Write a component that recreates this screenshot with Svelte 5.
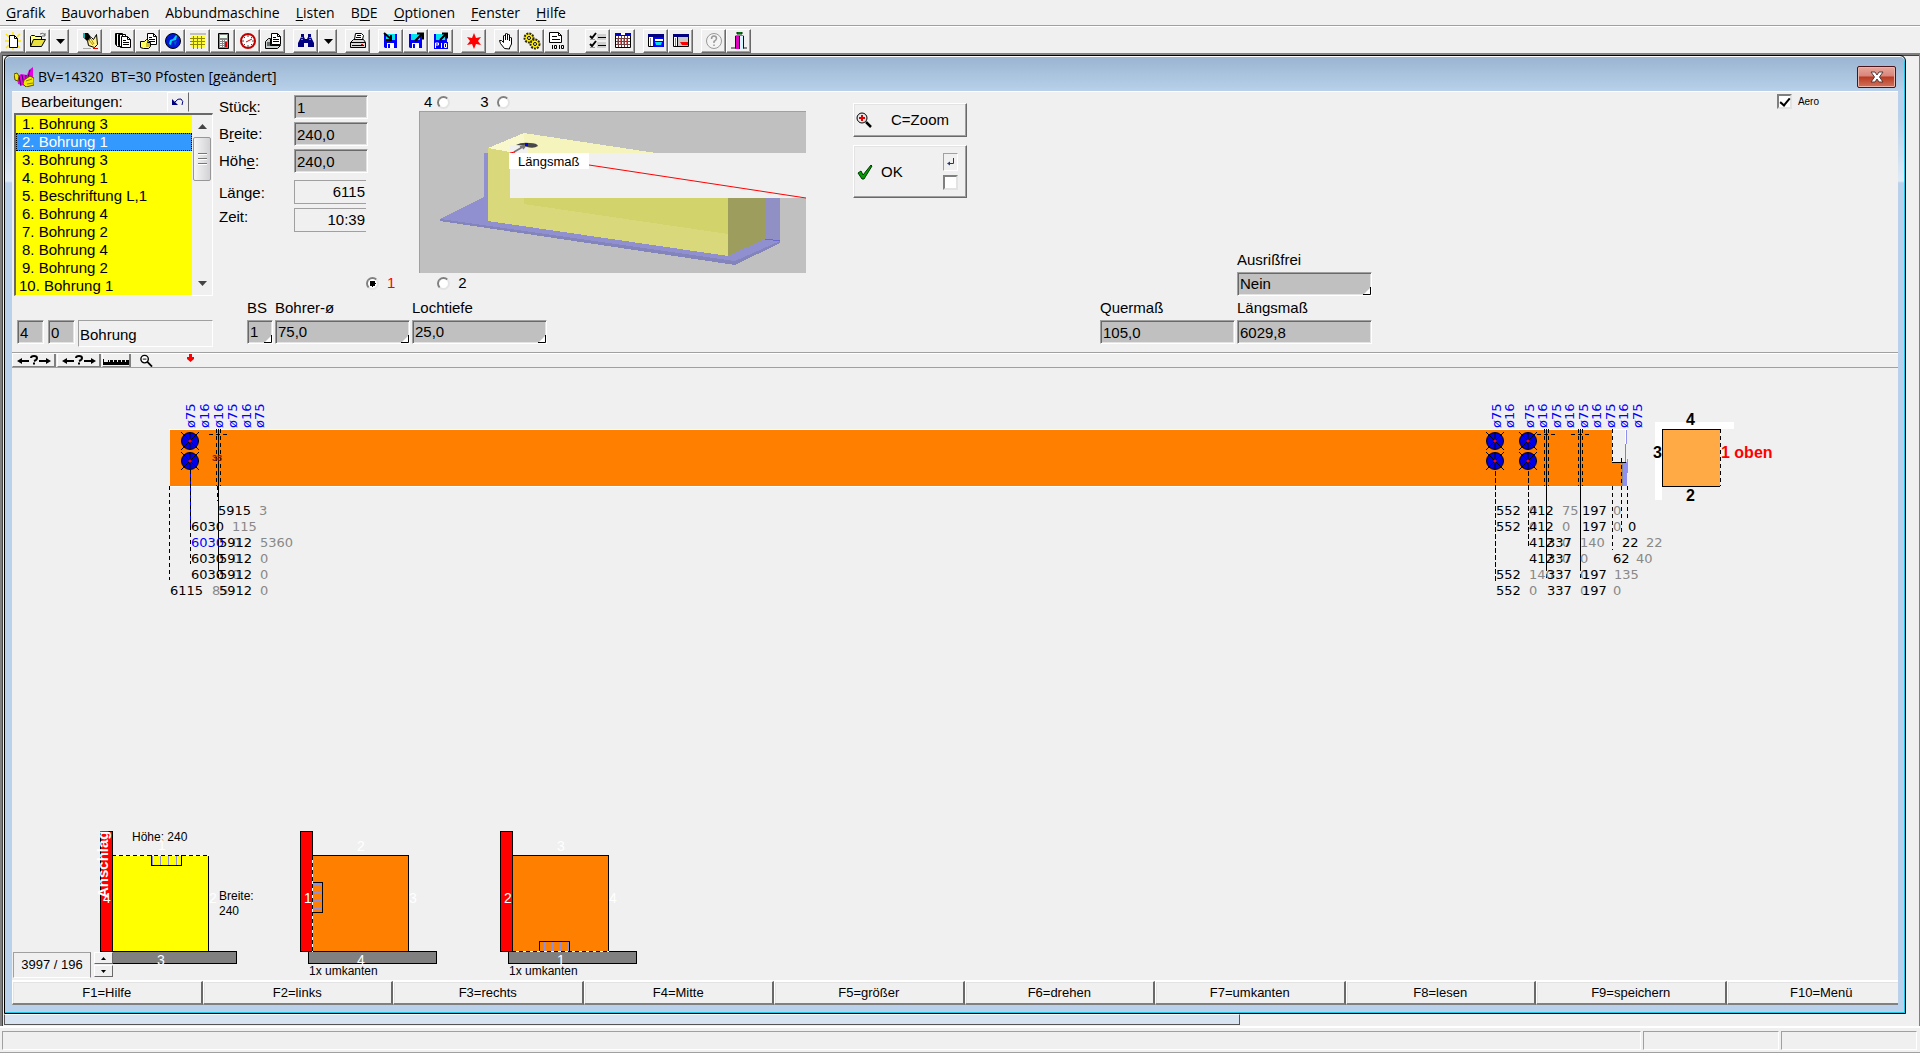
<script>
  const menus = [
    ['', 'G', 'rafik'], ['', 'B', 'auvorhaben'], ['Abbund', 'm', 'aschine'], ['', 'L', 'isten'],
    ['B', 'D', 'E'], ['', 'O', 'ptionen'], ['', 'F', 'enster'], ['', 'H', 'ilfe']
  ];

  const drop = '<path d="M5 7h9l-4.500 5z" fill="#000"/>';
  const disk = '<path d="M2 2h13v14H3l-1-1z" fill="#0000ff"/><path d="M4 2h9v6H4z" fill="#00e5ee"/><path d="M5 11h7v5H5z" fill="#fff"/><path d="M6 12h2v4H6z" fill="#0000ff"/>';
  const page = (x, y) => `<path d="M${x}.5 ${y}.5h6l3 3v8h-9z" fill="#fff" stroke="#000"/><path d="M${x + 6}.5 ${y}.5v3h3M${x + 2} ${y + 4}.5h3M${x + 2} ${y + 6}.5h6M${x + 2} ${y + 8}.5h6" fill="none" stroke="#000"/>`;
  const icons = {
    new: '<path d="M2 2l4 4M9 0v4M16 2l-3 3M1 9h4M2 16l3-3M9 14v4M16 16l-3-3M14 9h3" stroke="#ffe800" stroke-width="1.500"/><path d="M5.500 3.500h5l3 3v9h-8z" fill="#fff" stroke="#000"/><path d="M10.500 3.500v3h3" fill="none" stroke="#000"/>',
    open: '<path d="M1.500 14.500v-10l1-1h3l1 1h6v3" fill="#ffff80" stroke="#000"/><path d="M1.500 14.500l3-7h12l-4 7z" fill="#e8e040" stroke="#000"/><path d="M11 2q3-2 5 1M16 1v3h-3" fill="none" stroke="#666"/>',
    drop,
    brush: '<path d="M2 1h5l3 4-4 4-4-4z" fill="#000"/><path d="M2 1h2v5H2z" fill="#00b8b8"/><path d="M6.500 8.500l4-3 2 2 3-5 1 10-3 3-6-2z" fill="#fff080" stroke="#000"/><path d="M8 8l4 5M10 7l3 5" stroke="#b09000"/><path d="M2 16.500h8" stroke="#aaa"/><path d="M12 16.500h5" stroke="#e00000"/>',
    copies: '<path d="M1.500 1.500h7v13h-5l-2-2zM4.500 2.500h7v13h-5l-2-2z" fill="#fff" stroke="#000"/><path d="M2.500 2v11M5.500 3v11" stroke="#000"/>' + page(7, 4),
    handpage: page(8, 1) + '<path d="M1.500 9.500h4l2-2 2 1-1 2h3v4l-2 2h-5l-3-1z" fill="#ffff60" stroke="#000"/><path d="M7 12h4M7 14h4" stroke="#a08000"/>',
    globe: '<circle cx="9" cy="9" r="7.500" fill="#0018d8" stroke="#000"/><path d="M5 12l1-4 3-1 3-4 1 1-1 4-4 1-1 4z" fill="#00d8f0"/><path d="M10 10l3-1-2 5z" fill="#0060c0"/>',
    grid: '<path d="M1 1h16v2H1z" fill="#c0c0c0"/><path d="M2 4h14v12H2z" fill="#ffff30"/><path d="M1 6.500h15M1 9.500h15M1 12.500h15M4.500 4v13M8.500 4v13M12.500 4v13" stroke="#908800"/>',
    calc: '<path d="M4.500 1.500h10v15h-10z" fill="#888" stroke="#000"/><path d="M6 3h7v3H6z" fill="#e8ffe8"/><path d="M6 8h2v1H6zM9 8h1v1H9zM11 8h2v1h-2zM6 10h2v1H6zM9 10h1v1H9zM6 12h2v1H6zM9 12h1v1H9zM6 14h2v1H6zM9 14h1v1H9z" fill="#fff"/><path d="M11 10h2v5h-2z" fill="#e00000"/>',
    clock: '<circle cx="9" cy="9" r="7" fill="#fff" stroke="#c00000" stroke-width="2"/><path d="M9 3v2M9 13v2M3 9h2M13 9h2M5 5l1 1M13 5l-1 1M5 13l1-1M13 13l-1-1" stroke="#444"/><path d="M9 9l4-2M9 9l-2 1" stroke="#e00000"/>',
    printpage: page(7, 1) + '<path d="M1.500 9.500l3-3h2v7h10l-3 3h-12z" fill="#c8d0d0" stroke="#000"/><path d="M3 11h5M3 13h8" stroke="#000"/>',
    find: '<path d="M4 2h3v3l1 2h2l1-2V2h3v3l3 6v4h-6v-4H7v4H1v-4l3-6z" fill="#000080"/><path d="M5 5v4M13 5v4" stroke="#fff" stroke-dasharray="1 1"/>',
    print: '<path d="M5.500 7.500l1-6h6l2 2-1 4" fill="#fff" stroke="#000"/><path d="M8 3.500h4M7 5.500h5" stroke="#000"/><path d="M1.500 10.500l3-3h10l2 3v5h-15z" fill="#d8d8d8" stroke="#000"/><path d="M1.500 10.500h15M3 13.500h12" stroke="#000"/><path d="M12 12h2v1h-2z" fill="#e00000"/>',
    diskin: disk + '<path d="M2 1l7 6M9 3v5H4" stroke="#000" stroke-width="2" fill="none"/>',
    diskout: disk + '<path d="M8 9l7-7M10 1.500h6v6" stroke="#000" stroke-width="2" fill="none"/>',
    diskp: disk + '<path d="M8 8l6-6M10 1.500h5v5" stroke="#000" stroke-width="2" fill="none"/><path d="M2 10h14v7H2z" fill="#0000ff"/><path d="M3.500 16v-5h3v2h-3M9.500 11v5M12.500 11.500h2v4h-2z" stroke="#fff" fill="none"/>',
    star: '<path d="M9 1l2 5 5-1-3 4 3 4-5-1-2 5-2-5-5 1 3-4-3-4 5 1z" fill="#ff0000"/>',
    hand: '<path d="M6.500 16.500l-4-5-1-3h2l2 2V4l1-1 1 1v4-6l1-1 1 1v6-5l1-1 1 1v6-3l1-1 1 1v6l-2 4v1z" fill="#fff" stroke="#000"/>',
    gears: '<circle cx="6" cy="6" r="4.500" fill="#fff000" stroke="#302800" stroke-width="2" stroke-dasharray="2 1"/><circle cx="12" cy="12" r="4.500" fill="#fff000" stroke="#302800" stroke-width="2" stroke-dasharray="2 1"/><circle cx="6" cy="6" r="1.500" fill="#fff" stroke="#000"/><circle cx="12" cy="12" r="1.500" fill="#fff" stroke="#000"/>',
    binary: '<path d="M1.500 .500h9l3 3v7h-12z" fill="#fff" stroke="#000"/><path d="M10.500 .500v3h3M4 4.500h5M4 7.500h8" stroke="#000" fill="none"/><path d="M4.500 13v4M6.500 13.500h2v3h-2zM11.500 13v4M13.500 13.500h2v3h-2z" stroke="#000" fill="none"/>',
    checks: '<path d="M8 2h9v6H8zM8 10h9v6H8z" fill="#d0d0d0"/><path d="M1 4l2 2 4-5M1 12l2 2 4-5" fill="none" stroke="#000" stroke-width="2"/><path d="M9 5.500h8M9 13.500h8" stroke="#000"/><path d="M1 7.500h5M1 15.500h5" stroke="#999"/>',
    calendar: '<path d="M1.500 2.500h15v13h-15z" fill="#fff" stroke="#000"/><path d="M1 1h16v3H1z" fill="#0000d0"/><path d="M7 1h4v2H7z" fill="#fff"/><path d="M2 6.500h14M2 9.500h14M2 12.500h14M4.500 4v11M7.500 4v11M10.500 4v11M13.500 4v11" stroke="#704040"/><path d="M3 8h12M3 11h12" stroke="#e00000" stroke-dasharray="1 2"/>',
    winblue: '<path d="M1.500 2.500h15v12h-15z" fill="#fff" stroke="#000"/><path d="M1 2h16v3H1z" fill="#000080"/><path d="M6 5h11v10H6z" fill="#0000ff"/><path d="M8 7h8v2H8z" fill="#fff"/><path d="M8 10h7l-1 3H9z" fill="#00e0f0"/><path d="M3 7h1M3 9h1M3 11h1M3 13h1" stroke="#000"/>',
    winred: '<path d="M1.500 2.500h15v12h-15z" fill="#fff" stroke="#000"/><path d="M1 2h16v3H1z" fill="#000080"/><path d="M6 5h10v9H6z" fill="#c8c8c8"/><path d="M8 10h8v3h-6z" fill="#ff0000"/><path d="M3 7h1M3 9h1M3 11h1M3 13h1M5.500 5v10" stroke="#000"/>',
    help: '<circle cx="9" cy="9" r="7.500" fill="#f4f4f4" stroke="#999"/><path d="M6.500 7q0-3 2.500-3t2.500 2.500q0 1.500-2.500 3v1.500M9 12.500v1.500" stroke="#999" fill="none" stroke-width="1.500"/>',
    exit: '<path d="M7 0h5v2H7z" fill="#00b020" stroke="#003000"/><path d="M1 16.500h4.500V4h8v12.500H17" fill="none" stroke="#000080"/><path d="M6 4h3v13H6z" fill="#e000c0"/><path d="M9 4h4v13H9z" fill="#d8f4ff"/><path d="M9.500 4v13" stroke="#000"/><path d="M1 15h4v2H1zM14 15h3v2h-3z" fill="#888"/>'
  };

  const toolGroups = [
    ['new', 'open', 'drop'], ['brush'],
    ['copies', 'handpage', 'globe', 'grid', 'calc', 'clock', 'printpage'],
    ['find', 'drop'], ['print'], ['diskin', 'diskout', 'diskp'], ['star'],
    ['hand', 'gears', 'binary'], ['checks', 'calendar'], ['winblue', 'winred'], ['help', 'exit']
  ];

  const operations = ['Bohrung 3', 'Bohrung 1', 'Bohrung 3', 'Bohrung 1', 'Beschriftung L,1', 'Bohrung 4', 'Bohrung 2', 'Bohrung 4', 'Bohrung 2', 'Bohrung 1'];
  let selected = $state(1);
  let side = $state('1');

  const dims = [
    { id: 'stueck', a: 'Stüc', k: 'k', b: ':', value: '1' },
    { id: 'breite', a: 'B', k: 'r', b: 'eite:', value: '240,0' },
    { id: 'hoehe', a: 'Höh', k: 'e', b: ':', value: '240,0' }
  ];

  const diameters = [
    [195, 75], [209, 16], [223, 16], [237, 75], [251, 16], [264, 75],
    [1501, 75], [1514, 16], [1534, 75], [1547, 16], [1561, 75], [1574, 16],
    [1588, 75], [1601, 16], [1615, 75], [1628, 16], [1642, 75]
  ];
  const holes = [[190, 441], [190, 461], [1495, 441], [1495, 461], [1528, 441], [1528, 461]];

  // x, row, text, colour class
  const measures = [
    [218, 0, '5915', 'k'], [259, 0, '3', 'g'],
    [191, 1, '6030', 'k'], [232, 1, '115', 'g'],
    [191, 2, '6030', 'b'], [232, 2, '0', 'g'], [219, 2, '5912', 'k'], [260, 2, '5360', 'g'],
    [191, 3, '6030', 'k'], [232, 3, '0', 'g'], [219, 3, '5912', 'k'], [260, 3, '0', 'g'],
    [191, 4, '6030', 'k'], [232, 4, '0', 'g'], [219, 4, '5912', 'k'], [260, 4, '0', 'g'],
    [170, 5, '6115', 'k'], [212, 5, '85', 'g'], [219, 5, '5912', 'k'], [260, 5, '0', 'g'],
    [1496, 0, '552', 'k'], [1529, 0, '0', 'g'], [1529, 0, '412', 'k'], [1562, 0, '75', 'g'], [1582, 0, '197', 'k'], [1613, 0, '0', 'g'],
    [1496, 1, '552', 'k'], [1529, 1, '0', 'g'], [1529, 1, '412', 'k'], [1562, 1, '0', 'g'], [1582, 1, '197', 'k'], [1613, 1, '0', 'g'], [1628, 1, '0', 'k'],
    [1529, 2, '412', 'k'], [1562, 2, '0', 'g'], [1547, 2, '337', 'k'], [1580, 2, '140', 'g'], [1622, 2, '22', 'k'], [1646, 2, '22', 'g'],
    [1529, 3, '412', 'k'], [1562, 3, '0', 'g'], [1547, 3, '337', 'k'], [1580, 3, '0', 'g'], [1613, 3, '62', 'k'], [1636, 3, '40', 'g'],
    [1496, 4, '552', 'k'], [1529, 4, '140', 'g'], [1547, 4, '337', 'k'], [1580, 4, '0', 'g'], [1582, 4, '197', 'k'], [1614, 4, '135', 'g'],
    [1496, 5, '552', 'k'], [1529, 5, '0', 'g'], [1547, 5, '337', 'k'], [1580, 5, '0', 'g'], [1582, 5, '197', 'k'], [1613, 5, '0', 'g']
  ];

  const fkeys = ['Hilfe', 'links', 'rechts', 'Mitte', 'größer', 'drehen', 'umkanten', 'lesen', 'speichern', 'Menü'];
</script>

{#snippet combo(id, value)}
  <span class="combo">
    <select {id}><option>{value}</option></select>
    <svg viewBox="0 0 8 8" aria-hidden="true"><path d="M8 0v8H0z" fill="#fff" /><path d="M7.500 0v7.500H0" fill="none" stroke="#000" /></svg>
  </span>
{/snippet}

<div class="app">
  <nav class="menubar">
    {#each menus as [a, k, b]}
      <button>{a}<u>{k}</u>{b}</button>
    {/each}
  </nav>

  <div class="toolbar">
    {#each toolGroups as group, i}
      <div class="group" class:wide={i === 8}>
        {#each group as name}
          <button class="tool" class:narrow={name === 'drop'} aria-label={name}>
            <svg viewBox="0 0 18 18">{@html icons[name]}</svg>
          </button>
        {/each}
      </div>
    {/each}
  </div>

  <main class="mdi">
    <section class="window">
      <header class="title">
        <svg class="appicon" viewBox="0 0 20 20" aria-hidden="true">
          <path d="M19 0v10l-3 5-5 4-7-2-1-7 4-3 6 1 2-5z" fill="#e800e8" />
          <path d="M5 9l2 10M8 8l2 10M12 8l-1 8M16 3l-2 8" stroke="#400060" fill="none" />
          <path d="M0 7l3-1 2 3-1 5-3-1zM10 13l6-4 4 2v7l-8 2-3-3z" fill="#f0e800" stroke="#605000" />
          <path d="M12 14l6-2M13 17l6-1" stroke="#908000" />
        </svg>
        <h1>BV=14320&nbsp; BT=30 Pfosten [geändert]</h1>
        <button class="close" aria-label="Schließen">
          <svg viewBox="0 0 14 12"><path d="M1 1h4l2 3 2-3h4L9.500 6 13 11H9L7 8l-2 3H1l3.500-5z" fill="#fff" stroke="#553a3a" /></svg>
        </button>
      </header>

      <div class="client">
        <form class="form" onsubmit={(e) => e.preventDefault()}>
          <div class="ops">
            <div class="opshead">
              <span id="opslabel">Bearbeitungen:</span>
              <button type="button" class="undo" aria-label="Rückgängig">
                <svg viewBox="0 0 12 10"><path d="M3 5q3-4 6-3 3 2 1 6" fill="none" stroke="#000080" /><path d="M0 2v6h6z" fill="#000080" /></svg>
              </button>
            </div>
            <div class="listbox">
              <div class="items" role="listbox" aria-labelledby="opslabel">
                {#each operations as op, i}
                  <button type="button" role="option" aria-selected={selected === i} class:tens={i === 9} onclick={() => (selected = i)}>{i + 1}. {op}</button>
                {/each}
              </div>
              <div class="scroll">
                <svg viewBox="0 0 9 5"><path d="M0 5L4.500 0 9 5z" fill="#444" /></svg>
                <div class="thumb"><i></i><i></i><i></i></div>
                <svg viewBox="0 0 9 5"><path d="M0 0h9L4.500 5z" fill="#444" /></svg>
              </div>
            </div>
            <div class="opcode">
              <input class="field" aria-label="Code" value="4" />
              <input class="field" aria-label="Variante" value="0" />
              <output class="opname">Bohrung</output>
            </div>
          </div>

          <div class="middle">
            <div class="upper">
              <div class="dims">
                {#each dims as d}
                  <label for={d.id}>{d.a}<u>{d.k}</u>{d.b}</label>
                  <input class="field" id={d.id} value={d.value} />
                {/each}
                <label class="calc" for="laenge">Länge:</label><output class="calc" id="laenge">6115</output>
                <label class="time" for="zeit">Zeit:</label><output class="time" id="zeit">10:39</output>
              </div>
              <div class="preview">
                <div class="sides">
                  <label>4<input type="radio" name="side" value="4" bind:group={side} /></label>
                  <label class="three">3<input type="radio" name="side" value="3" bind:group={side} /></label>
                </div>
                <svg class="solid" viewBox="0 0 387 162" role="img" aria-label="Längsmaß">
                  <g shape-rendering="crispEdges">
                    <path d="M0 0h387v162H0z" fill="#c0c0c0" />
                    <path d="M65 42h5v45h-5zM21 108L65 86h5v24L309 145l37-17V87h15v45l-45 22L21 110z" fill="#9090d0" />
                    <path d="M21 108L316 150l45-20v2l-45 22L21 110z" fill="#8484bc" />
                    <path d="M346 87h15v43l-15-2z" fill="#9090c4" />
                    <path d="M69 37l36-15 132 20v3H69z" fill="#f4f4bc" />
                    <path d="M69 37l36-15v13l-14 7H80z" fill="#f8f8cc" />
                    <path d="M69 37l22 4v46h218v58L69 110z" fill="#d9d97b" />
                    <path d="M105 87h204v36L105 93z" fill="#d3d36c" />
                    <path d="M309 87h37v41l-37 17z" fill="#9d9d5d" />
                    <path d="M91 42h296v45H91zM91 34h18v8H91z" fill="#f0f0f0" />
                    <path d="M346 128l15 2" stroke="#6868d0" />
                  </g>
                  <path d="M97 34q5-3 14-2 7 0 8 3-4 3-11 1-4-2-11-2z" fill="#484848" />
                  <path d="M95 41l12-7M101 36l6-2-3 4" stroke="#777" stroke-width="1.500" fill="none" />
                  <path d="M106 32h3v3h-3z" fill="#0000ff" />
                  <path d="M91 42l5-1" stroke="#f00" />
                  <path d="M170 54L387 87" stroke="#f00" />
                  <path d="M90 42h80v16H90z" fill="#fff" />
                  <text x="99" y="55" font-size="13">Längsmaß</text>
                  <path d="M0 .500h387M.500 0v162" stroke="#a0a0a0" />
                </svg>
              </div>
            </div>
            <div class="sides below">
              <label class="red"><input type="radio" name="side" value="1" bind:group={side} />1</label>
              <label class="two"><input type="radio" name="side" value="2" bind:group={side} />2</label>
            </div>
            <div class="params">
              <div class="cell tiny"><label for="bs">BS</label>{@render combo('bs', '1')}</div>
              <div class="cell"><label for="bohrer">Bohrer-ø</label>{@render combo('bohrer', '75,0')}</div>
              <div class="cell"><label for="tiefe">Lochtiefe</label>{@render combo('tiefe', '25,0')}</div>
            </div>
          </div>

          <div class="actions">
            <button type="button" class="raised zoom">
              <svg viewBox="0 0 16 16"><circle cx="6" cy="6" r="5" fill="#e8e8e8" stroke="#000" /><path d="M3 6h6M6 3v6" stroke="#e00000" stroke-width="2" /><path d="M10 10l5 5" stroke="#000" stroke-width="2.500" /></svg>
              <span>C=Zoom</span>
            </button>
            <div class="raised okbox">
              <button type="submit">
                <svg viewBox="0 0 16 16"><path d="M1 9l3-2 2 4 8-10 1 1-8 13H5z" fill="#00a000" stroke="#003800" /></svg>
                <span>OK</span>
              </button>
              <div class="okside">
                <span class="enter"><svg viewBox="0 0 8 8"><path d="M6.500 0v5.500H2" fill="none" stroke="#223a66" /><path d="M0 5.500l3-2v4z" fill="#223a66" /></svg></span>
                <input type="checkbox" aria-label="Enter" />
              </div>
            </div>
          </div>

          <div class="places">
            <div class="cell"><label for="quer">Quermaß</label><input class="field" id="quer" value="105,0" /></div>
            <div class="stack">
              <div class="cell"><label for="ausriss">Ausrißfrei</label>{@render combo('ausriss', 'Nein')}</div>
              <div class="cell"><label for="laengs">Längsmaß</label><input class="field" id="laengs" value="6029,8" /></div>
            </div>
          </div>

          <label class="aero"><input type="checkbox" checked />Aero</label>
        </form>

        <div class="subbar">
          <button class="mini" aria-label="Maß links"><svg viewBox="0 0 34 12"><path d="M3 7h9M22 7h9" stroke="#000" stroke-width="2" /><path d="M0 7l5-3v6zM34 7l-5-3v6z" /><path d="M14 4q0-2 3-2t3 2-3 3M17 8.500v2" fill="none" stroke="#000" stroke-width="2" /></svg></button>
          <button class="mini" aria-label="Maß rechts"><svg viewBox="0 0 34 12"><path d="M3 7h9M22 7h9" stroke="#000" stroke-width="2" /><path d="M0 7l5-3v6zM34 7l-5-3v6z" /><path d="M14 4q0-2 3-2t3 2-3 3M17 8.500v2" fill="none" stroke="#000" stroke-width="2" /></svg></button>
          <button class="mini ruler" aria-label="Lineal"><svg viewBox="0 0 26 12"><path d="M0 5h1v3h4V6h1v2h1V6h3v2h1V6h3v2h1V6h3v2h1V6h3v2h1V6h3v5H0z" /></svg></button>
          <button class="flat" aria-label="Verkleinern"><svg viewBox="0 0 14 14"><circle cx="5.500" cy="5.500" r="4" fill="#fff" stroke="#000" stroke-width="1.500" /><path d="M3.500 5.500h4" stroke="#000" /><path d="M8.500 8.500l5 5" stroke="#000" stroke-width="2" /></svg></button>
          <svg class="marker" viewBox="0 0 7 8" aria-hidden="true"><path d="M2 0h3v3h2v2L3.500 8 0 5V3h2z" fill="#f00" /></svg>
        </div>

        <div class="canvas">
          <svg class="beam" viewBox="12 400 1886 210" role="img" aria-label="Bauteil">
            <g shape-rendering="crispEdges">
              <path d="M169 429.500h1458M169 486.500h1446" stroke="#fff" />
              <path d="M170 430h1442v32h10v24H170z" fill="#ff8000" />
              <path d="M1622 462h5v24h-5z" fill="#9090f0" />
              <path d="M1622.500 462v24" stroke="#888" />
              <path d="M1612 462.500h14" stroke="#000" />
              <path d="M1625.500 444v18" stroke="#888" />
              <path d="M1626.500 430v14M1627.500 459v14" stroke="#9090f0" />
              <path d="M1625.500 430v14" stroke="#fff" />
            </g>
            {#each holes as [x, y]}
              <circle cx={x} cy={y} r="8.500" fill="#0000e8" stroke="#000" />
              <path d="M{x - 9} {y - 9}l18 18M{x + 9} {y - 9}l-18 18M{x} {y - 8}v16" stroke="#000" />
              <circle cx={x} cy={y} r="1.500" fill="#ff0000" />
            {/each}
            <g shape-rendering="crispEdges" stroke="#000" fill="none">
              <path d="M218.500 429v138M1546.500 429v138M1580.500 429v138" />
              <path stroke-dasharray="4 3" d="M169.500 486v94M190.500 470v94M216.500 429v57M220.500 429v57M217.500 486v15M218.500 567v13M209 434.500h20M1544.500 429v57M1548.500 429v57M1578.500 429v57M1582.500 429v57M1537 434.500h19M1571 434.500h18M1612.500 429v33M1612.500 486v64M1621.500 458v76M1627.500 486v32M1546.500 567v13M1580.500 567v13" />
              <path stroke-dasharray="5 2" d="M1495.500 471v112M1528.500 471v77" />
              <path stroke="#0000ff" stroke-dasharray="3 4" stroke-dashoffset="3" d="M190.500 470v60" />
            </g>
            <text x="212" y="461" font-size="9" fill="#802000" font-weight="bold">38</text>
            {#each diameters as [x, d]}
              <text class="dia" transform="translate({x} 428) rotate(-90)">ø{d}</text>
            {/each}
            {#each measures as [x, row, t, c]}
              <text class="num {c}" {x} y={515 + row * 16}>{t}</text>
            {/each}
            <g shape-rendering="crispEdges">
              <path d="M1655 422h79v7h-72v71h-7z" fill="#fff" />
              <path d="M1662 429h58v57h-58z" fill="#ffaa44" />
              <path d="M1720 429.500h-57.500v57h57.500" fill="none" stroke="#000" />
              <path d="M1720.500 429v57" stroke="#000" stroke-dasharray="4 3" />
            </g>
            <g class="face">
              <text x="1686" y="425">4</text>
              <text x="1653" y="458">3</text>
              <text x="1686" y="501">2</text>
              <text class="top" x="1721" y="458">1 oben</text>
            </g>
          </svg>

          <div class="setup">
            <svg class="stops" viewBox="12 820 640 160" role="img" aria-label="Anschlag">
              <g shape-rendering="crispEdges" stroke="#000">
                <path d="M108.500 951.500h128v12h-128zM308.500 951.500h128v12h-128zM508.500 951.500h128v12h-128z" fill="#808080" />
                <path d="M100.500 831.500h12v120h-12zM300.500 831.500h12v120h-12zM500.500 831.500h12v120h-12z" fill="#ff0000" />
                <path d="M112.500 855.500h96v96h-96z" fill="#ffff00" />
                <path d="M312.500 855.500h96v96h-96zM512.500 855.500h96v96h-96z" fill="#ff8000" />
                <path d="M112 855.500h97M312.500 856v96M512 951.500h97" stroke="#fff" />
                <path d="M112 855.500h97M312.500 856v96M512 951.500h97" stroke-dasharray="4 3" />
                <path d="M152.500 856v9M160.500 856v9M168.500 856v9M176.500 856v9M313 884.500h10M313 892.500h10M313 900.500h10M313 908.500h10M544.500 942v9M552.500 942v9M560.500 942v9M568.500 942v9" stroke="#9090e0" />
                <path d="M151.500 855v10.500h30V855M313 882.500h9.500v30H313M539.500 951v-9.500h30v9.500" fill="none" />
              </g>
              <g class="small">
                <text x="132" y="841">Höhe: 240</text>
                <text x="219" y="900">Breite:</text>
                <text x="219" y="915">240</text>
                <text x="309" y="975">1x umkanten</text>
                <text x="509" y="975">1x umkanten</text>
              </g>
              <g class="white">
                <text x="158" y="850">1</text><text x="103" y="903">4</text><text x="209" y="903">2</text><text x="157" y="965">3</text>
                <text x="357" y="851">2</text><text x="304" y="903">1</text><text x="409" y="903">3</text><text x="357" y="965">4</text>
                <text x="557" y="851">3</text><text x="504" y="903">2</text><text x="609" y="903">4</text><text x="557" y="965">1</text>
                <text class="stop" transform="translate(108 898) rotate(-90)">Anschlag</text>
              </g>
            </svg>
            <div class="readout">
              <output>3997 / 196</output>
              <div class="spin">
                <button aria-label="Mehr"><svg viewBox="0 0 5 3"><path d="M0 3l2.500-3L5 3z" /></svg></button>
                <button aria-label="Weniger"><svg viewBox="0 0 5 3"><path d="M0 0h5L2.500 3z" /></svg></button>
              </div>
            </div>
          </div>
        </div>

        <div class="fbar">
          {#each fkeys as f, i}
            <button>F{i + 1}={f}</button>
          {/each}
        </div>
      </div>
    </section>
    <div class="behind"></div>
  </main>

  <footer class="status"><span class="main"></span><span></span><span></span></footer>
</div>

<style>
  :global(body) { margin: 0; background: #f0f0f0; }
  * { box-sizing: border-box; }
  .app {
    display: flex; flex-direction: column; min-height: 100vh; overflow: hidden;
    background: #f0f0f0; color: #000;
    font: 15px/18px "Liberation Sans", Arial, sans-serif;
  }
  button, input, select, output { font: inherit; color: inherit; }
  button { border: 0; padding: 0; background: none; }
  svg { display: block; }

  .menubar { display: flex; gap: 16px; height: 26px; padding: 0 6px; border-bottom: 1px solid #a0a0a0; }
  .menubar button { font: 14px/24px "Open Sans", sans-serif; }
  u { text-underline-offset: 2px; }

  .toolbar { display: flex; gap: 8px; height: 27px; padding-top: 2px; border-top: 1px solid #fff; }
  .group { display: flex; }
  .wide { margin-left: 8px; }
  .tool {
    display: grid; place-items: center; width: 25px; height: 24px;
    border: 1px solid; border-color: #fff #696969 #696969 #fff; box-shadow: inset -1px -1px 0 #a0a0a0;
  }
  .tool svg { width: 18px; height: 18px; }
  .narrow { width: 19px; }

  .mdi {
    flex: 1; display: flex; flex-direction: column; padding: 0 13px 1px 2px;
    border: solid #808080; border-width: 2px 1px 0 2px;
    box-shadow: inset 1px 1px 0 #404040;
  }
  .window {
    flex: 1; display: flex; flex-direction: column; padding: 0 7px 8px;
    border: 1px solid #000; border-radius: 6px 6px 0 0;
    background: linear-gradient(#99b4d1, #b9d1ea 36px, #b9d1ea 60px, #dfeaf6 125px, #b9d1ea 127px);
    box-shadow: inset 0 1px 0 #fff, inset -1px -1px 0 #20c8e8;
  }
  .title { display: flex; align-items: center; height: 35px; padding: 6px 2px 0; }
  .appicon { width: 20px; height: 20px; margin-right: 4px; }
  h1 { margin: 0; font: 14px/20px "Open Sans", sans-serif; }
  .close {
    display: grid; place-items: center; width: 39px; height: 22px; margin-left: auto;
    border: 1px solid #4a1418; border-radius: 2px;
    background: linear-gradient(#e8a79c, #d8857a 45%, #b93a22 50%, #d0735c);
    box-shadow: inset 0 0 0 1px #e9b5ab;
  }
  .close svg { width: 14px; height: 12px; }

  .client {
    flex: 1; display: flex; flex-direction: column; overflow: hidden;
    border-top: 1px solid #fff; background: #f0f0f0;
  }
  .form { display: flex; height: 261px; border-bottom: 1px solid #a0a0a0; }

  .ops { display: flex; flex-direction: column; width: 202px; padding: 0 1px 5px 2px; }
  .opshead { display: flex; justify-content: space-between; height: 21px; padding: 0 24px 0 7px; line-height: 20px; }
  .undo {
    display: grid; place-items: center; width: 22px; height: 20px;
    border: 1px solid; border-color: #fff #696969 #f0f0f0 #fff;
  }
  .undo svg { width: 12px; height: 10px; }
  .listbox {
    display: flex; height: 183px; border: 1px solid; border-color: #696969 #fff #fff #696969;
    border-width: 2px 1px 1px 2px;
  }
  .items { flex: 1; display: flex; flex-direction: column; background: #ff0; }
  .items button { height: 18px; padding-left: 6px; text-align: left; line-height: 18px; white-space: nowrap; }
  .items .tens { padding-left: 3px; }
  .items [aria-selected="true"] { background: #3399ff; color: #fff; outline: 1px dotted #000; outline-offset: -1px; }
  .scroll { display: flex; flex-direction: column; align-items: center; width: 20px; padding: 9px 0; background: #f0f0f0; }
  .scroll svg { width: 9px; height: 5px; }
  .thumb {
    display: flex; flex-direction: column; align-items: center; justify-content: center; gap: 3px;
    width: 18px; height: 44px; margin: 8px 0 auto; border: 1px solid #979797; border-radius: 2px;
    background: linear-gradient(90deg, #f5f5f5, #d2d2d6);
  }
  .thumb i { width: 9px; height: 2px; background: #777; border-bottom: 1px solid #fff; }
  .opcode { display: flex; gap: 4px; margin-top: 24px; padding-left: 3px; }
  .opcode .field { width: 27px; }
  .opname {
    flex: 1; height: 27px; margin-left: -1px; padding: 4px 1px; line-height: 20px;
    border: 1px solid; border-color: #a0a0a0 #fff #fff #a0a0a0;
  }

  .field, select {
    display: block; width: 100%; height: 24px; margin: 0; padding: 0 2px; border-radius: 0; outline: 0;
    border: 1px solid; border-color: #a0a0a0 #fff #fff #a0a0a0; background: #c0c0c0;
    box-shadow: inset 1px 1px 0 #696969, inset -1px -1px 0 #e3e3e3;
    appearance: none;
  }
  .combo { position: relative; display: block; }
  .combo svg { position: absolute; right: 1px; bottom: 1px; width: 8px; height: 8px; }

  .middle { display: flex; flex-direction: column; width: 587px; margin-left: 5px; padding: 3px 0 8px; }
  .upper { display: flex; justify-content: space-between; }
  .dims { display: grid; grid-template-columns: 75px 74px; grid-template-rows: 24px 24px 24px 28px 24px; row-gap: 3px; align-content: start; }
  .dims label { line-height: 23px; }
  .dims output {
    width: 72px; height: 24px; padding-right: 1px; text-align: right; line-height: 22px;
    border: 1px solid #a0a0a0; border-right: 0;
  }
  .dims .calc { align-self: end; }
  .dims output.time { margin-top: 1px; }
  .dims label.time { line-height: 20px; }
  .preview { width: 387px; }
  .sides { display: flex; align-items: flex-start; height: 16px; padding-left: 5px; }
  .sides label { display: flex; align-items: center; gap: 5px; line-height: 14px; }
  .sides .three { margin-left: 30px; gap: 8px; }
  .solid { width: 387px; height: 162px; }
  .below { margin-top: 3px; padding-left: 147px; }
  .below label { gap: 8px; }
  .below .red { color: #f00; }
  .below .two { margin-left: 42px; }
  .params { display: flex; gap: 2px; margin-top: auto; padding-left: 28px; }
  .cell { width: 135px; }
  .cell > label { display: block; height: 20px; line-height: 16px; white-space: nowrap; }
  .tiny { width: 26px; }

  input[type="radio"], input[type="checkbox"] {
    appearance: none; flex: none; margin: 0; background: #fff;
    border: 2px solid; border-color: #808080 #e3e3e3 #e3e3e3 #808080;
  }
  input[type="radio"] { width: 13px; height: 13px; border-radius: 50%; }
  input[type="radio"]:checked { background: radial-gradient(#000 3px, #fff 3px); }
  input[type="checkbox"] { width: 15px; height: 15px; }
  .aero input:checked::before {
    content: ""; display: block; width: 4px; height: 8px; margin: 0 0 0 3px;
    border: solid #000; border-width: 0 2px 2px 0; transform: rotate(40deg);
  }

  .actions { display: flex; flex-direction: column; gap: 8px; width: 114px; margin-left: 47px; padding-top: 11px; }
  .raised { border: 1px solid; border-color: #fff #696969 #696969 #fff; box-shadow: inset -1px -1px 0 #a0a0a0, inset 1px 1px 0 #e3e3e3; }
  .zoom { display: flex; align-items: center; height: 34px; padding-left: 2px; }
  .zoom svg, .okbox button svg { width: 16px; height: 16px; }
  .zoom span { flex: 1; padding-left: 2px; text-align: center; }
  .okbox { display: flex; height: 53px; padding: 0 8px 0 3px; }
  .okbox button { flex: 1; display: flex; align-items: center; gap: 8px; }
  .okside { display: flex; flex-direction: column; gap: 4px; padding-top: 7px; }
  .enter { display: grid; place-items: center; width: 15px; height: 18px; border: 1px solid; border-color: #a0a0a0 #fff #fff #a0a0a0; }
  .enter svg { width: 8px; height: 8px; }

  .places { display: flex; align-items: flex-end; gap: 2px; margin-left: 133px; padding-bottom: 8px; }
  .stack { display: flex; flex-direction: column; gap: 4px; }

  .aero { display: flex; align-items: flex-start; gap: 6px; margin: 2px 79px 0 auto; font-size: 10px; line-height: 16px; }

  .subbar { display: flex; height: 15px; border-top: 1px solid #fff; border-bottom: 1px solid #a0a0a0; }
  .mini {
    display: grid; place-items: center; width: 44px; margin-right: 1px;
    border: solid; border-color: #fff #808080 #808080 #fff; border-width: 0 2px 1px 1px;
  }
  .mini svg { width: 34px; height: 12px; }
  .ruler { width: 29px; }
  .ruler svg { width: 26px; }
  .flat { margin-left: 7px; }
  .flat svg { width: 14px; height: 13px; }
  .marker { width: 7px; height: 8px; margin-left: 34px; }

  .canvas { flex: 1; display: flex; flex-direction: column; justify-content: space-between; padding-top: 32px; }
  .beam { width: 100%; height: auto; }
  .dia { font: 13px "DejaVu Sans", sans-serif; fill: #0000ff; }
  .num { font: 13px "DejaVu Sans", sans-serif; }
  .g { fill: #888; }
  .b { fill: #0000ff; }
  .face { font-size: 16px; font-weight: bold; }
  .top { fill: #f00; }

  .setup { display: grid; align-items: end; justify-items: start; }
  .setup > * { grid-area: 1 / 1; }
  .stops { width: 640px; height: 160px; }
  .small { font-size: 12px; }
  .white { font-size: 14px; fill: #fff; }
  .stop { font-size: 15px; font-weight: bold; }
  .readout { display: flex; gap: 3px; padding: 0 0 2px 1px; }
  .readout output {
    width: 78px; height: 26px; line-height: 24px; font-size: 13px; text-align: center;
    border: 1px solid; border-color: #a0a0a0 #808080 #fff #a0a0a0;
  }
  .spin { display: flex; flex-direction: column; gap: 1px; }
  .spin button {
    display: grid; place-items: center; width: 19px; height: 12px; background: #f0f0f0;
    border: 1px solid; border-color: #fff #696969 #696969 #fff;
  }
  .spin svg { width: 5px; height: 3px; }

  .fbar { display: grid; grid-template-columns: repeat(10, 1fr); height: 25px; margin-right: -19px; border-top: 1px solid #fff; }
  .fbar button {
    font-size: 13px; border: solid; border-width: 1px 2px 2px 1px;
    border-color: #fff #696969 #808080 #fff; box-shadow: inset 1px 1px 0 #e3e3e3;
  }

  .behind { width: 65%; height: 11px; background: #d8e4f1; border: 1px solid #555; border-top-color: #fff; }

  .status { display: flex; gap: 2px; height: 27px; padding: 3px 3px 2px 2px; border-top: 2px solid #fff; border-bottom: 1px solid #a0a0a0; }
  .status span { width: 136px; border: 1px solid; border-color: #a0a0a0 #fff #fff #a0a0a0; }
  .status .main { flex: 1; }
</style>
